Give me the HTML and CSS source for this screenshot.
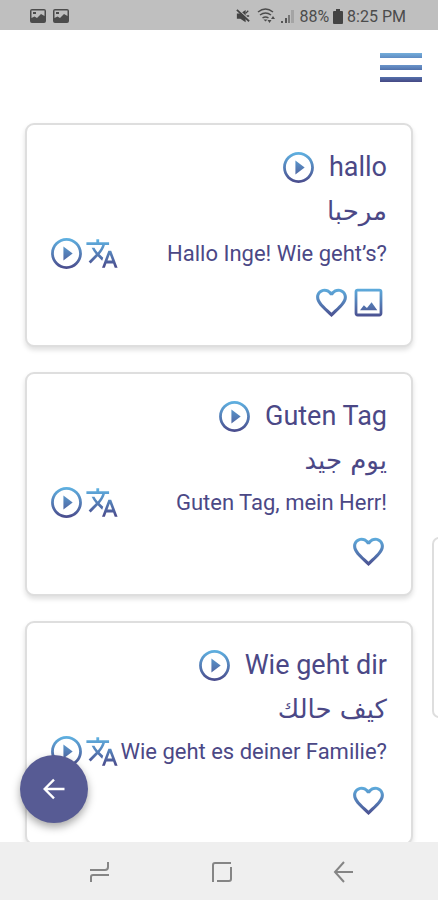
FILE: index.html
```html
<!DOCTYPE html>
<html lang="de">
<head>
<meta charset="utf-8">
<meta name="viewport" content="width=device-width, initial-scale=1">
<title>Wortschatz</title>
<link rel="stylesheet" href="styles.css">
</head>
<body>
<svg class="defs" aria-hidden="true">
  <defs>
    <linearGradient id="tint" gradientUnits="userSpaceOnUse" x1="0" y1="2" x2="0" y2="22">
      <stop offset="0" stop-color="#5fb2e2"/>
      <stop offset="1" stop-color="#4a4b8c"/>
    </linearGradient>
    <symbol id="play" viewBox="0 0 24 24"><path fill="url(#tint)" d="M10 16.500l6-4.500-6-4.500v9zM12 2C6.480 2 2 6.480 2 12s4.480 10 10 10 10-4.480 10-10S17.520 2 12 2zm0 18.200c-4.520 0-8.200-3.680-8.200-8.200S7.480 3.800 12 3.800s8.200 3.680 8.200 8.200-3.680 8.200-8.200 8.200z"/></symbol>
    <symbol id="translate" viewBox="0 0 24 24"><path fill="url(#tint)" d="M12.870 15.070l-2.540-2.510.030-.030c1.740-1.940 2.980-4.170 3.710-6.530H17V4h-7V2H8v2H1v1.990h11.170C11.500 7.920 10.440 9.750 9 11.350 8.070 10.320 7.300 9.190 6.690 8h-2c.730 1.630 1.730 3.170 2.980 4.560l-5.090 5.020L4 19l5-5 3.110 3.110.760-2.040zM18.500 10h-2L12 22h2l1.120-3h4.750L21 22h2l-4.500-12zm-2.620 7l1.620-4.330L19.120 17h-3.240z"/></symbol>
    <symbol id="heart" viewBox="0 0 24 24"><path fill="url(#tint)" d="M16.500 3c-1.740 0-3.410.810-4.500 2.090C10.910 3.810 9.240 3 7.500 3 4.420 3 2 5.420 2 8.500c0 3.780 3.400 6.860 8.550 11.540L12 21.350l1.450-1.320C18.600 15.360 22 12.280 22 8.500 22 5.420 19.580 3 16.500 3zm-4.400 15.550l-.100.100-.100-.100C7.140 14.240 4 11.390 4 8.500 4 6.500 5.500 5 7.500 5c1.540 0 3.040.990 3.570 2.360h1.870C13.460 5.990 14.960 5 16.500 5c2 0 3.500 1.500 3.500 3.500 0 2.890-3.140 5.740-7.900 10.050z"/></symbol>
    <symbol id="picture" viewBox="0 0 24 24"><path fill="url(#tint)" fill-rule="evenodd" d="M5 3h14a2 2 0 0 1 2 2v14a2 2 0 0 1-2 2H5a2 2 0 0 1-2-2V5a2 2 0 0 1 2-2zM4.800 4.800v14.400h14.400V4.800zM6.500 17l2.500-3.200 2 1.700 3-3.700 3.700 5.200z"/></symbol>
    <symbol id="photo" viewBox="0 0 16 14"><path fill="#4c4c4c" fill-rule="evenodd" d="M2 0h12a2 2 0 0 1 2 2v10a2 2 0 0 1-2 2H2a2 2 0 0 1-2-2V2a2 2 0 0 1 2-2zM1.500 1.500V9l3-1.500L7 9l4-4 3.500 2V1.500zM3 3h3v2H3z"/></symbol>
  </defs>
</svg>
<div class="screen">
  <div class="status">
    <div class="status-side">
      <svg class="photo"><use href="#photo"/></svg>
      <svg class="photo"><use href="#photo"/></svg>
    </div>
    <div class="status-side status-info">
      <svg class="mute" viewBox="0 0 16 16" fill="#444"><path d="M1 5h4l6-4v14l-6-4H1z"/><path d="M11 5l3-3M12 8h3" stroke="#444" stroke-width="1.500"/><path d="M2 0l14 13" stroke="#bfbfbf" stroke-width="1.500"/><path d="M1 1l14 13" stroke="#444" stroke-width="2"/></svg>
      <svg class="wifi" viewBox="0 0 20 16" fill="none" stroke="#4c4c4c" stroke-width="1.500"><path d="M1 4q7.500-6 15 0M3 7q5.500-4 11 0M5.500 10q3-2.200 6 0"/><path d="M8.500 13.500l-2-2h4z" fill="#4c4c4c" stroke="none"/><path d="M10.500 12l2 3 2-3zM14 11l2-3 2 3z" fill="#4c4c4c" stroke="none"/></svg>
      <svg class="signal" viewBox="0 0 14 16"><path fill="#555" d="M0 13h2v2H0zM4 10h2v5H4z"/><path fill="#777" d="M7 7h2v8H7z"/><path fill="#a4a4a4" d="M10 2h3v13h-3z"/></svg>
      <span>88%</span>
      <svg class="battery" viewBox="0 0 10 15"><path fill="#444" d="M3 0h4v2h2a1 1 0 0 1 1 1v11a1 1 0 0 1-1 1H1a1 1 0 0 1-1-1V3a1 1 0 0 1 1-1h2z"/></svg>
      <span>8:25 PM</span>
    </div>
  </div>
  <header class="bar">
    <button class="menu" aria-label="Menü"><i class="line light"></i><i class="line mid"></i><i class="line dark"></i></button>
  </header>
  <main class="list">
    <article class="card">
      <div class="word"><button class="icon" aria-label="Wort abspielen"><svg><use href="#play"/></svg></button><h2>hallo</h2></div>
      <p class="arabic" lang="ar" dir="rtl">مرحبا</p>
      <div class="example">
        <div class="tools"><button class="icon" aria-label="Satz abspielen"><svg><use href="#play"/></svg></button><button class="icon small" aria-label="Übersetzen"><svg><use href="#translate"/></svg></button></div>
        <p>Hallo Inge! Wie geht’s?</p>
      </div>
      <div class="actions"><button class="icon" aria-label="Merken"><svg><use href="#heart"/></svg></button><button class="icon" aria-label="Bild"><svg><use href="#picture"/></svg></button></div>
    </article>
    <article class="card">
      <div class="word"><button class="icon" aria-label="Wort abspielen"><svg><use href="#play"/></svg></button><h2>Guten Tag</h2></div>
      <p class="arabic" lang="ar" dir="rtl">يوم جيد</p>
      <div class="example">
        <div class="tools"><button class="icon" aria-label="Satz abspielen"><svg><use href="#play"/></svg></button><button class="icon small" aria-label="Übersetzen"><svg><use href="#translate"/></svg></button></div>
        <p>Guten Tag, mein Herr!</p>
      </div>
      <div class="actions"><button class="icon" aria-label="Merken"><svg><use href="#heart"/></svg></button></div>
    </article>
    <article class="card">
      <div class="word"><button class="icon" aria-label="Wort abspielen"><svg><use href="#play"/></svg></button><h2>Wie geht dir</h2></div>
      <p class="arabic" lang="ar" dir="rtl">كيف حالك</p>
      <div class="example">
        <div class="tools"><button class="icon" aria-label="Satz abspielen"><svg><use href="#play"/></svg></button><button class="icon small" aria-label="Übersetzen"><svg><use href="#translate"/></svg></button></div>
        <p>Wie geht es deiner Familie?</p>
      </div>
      <div class="actions"><button class="icon" aria-label="Merken"><svg><use href="#heart"/></svg></button></div>
    </article>
  </main>
  <nav class="system">
    <button class="key" aria-label="Letzte Apps"><svg viewBox="0 0 24 24"><path d="M2 10h15q3 0 3-3V2M21 15H5q-2 0-2 2v5"/></svg></button>
    <button class="key" aria-label="Startseite"><svg viewBox="0 0 24 24"><path d="M3 22V5q0-2 2-2h16M21 7v12q0 2-2 2H7"/></svg></button>
    <button class="key" aria-label="Zurück"><svg viewBox="0 0 24 24"><path d="M21 12H3M12 2L3 12l9 10"/></svg></button>
  </nav>
  <div class="edge"></div>
  <button class="back" aria-label="Zurück zur Übersicht"><svg viewBox="0 0 24 24"><path d="M21 12H5M12 4l-8 8 8 8"/></svg></button>
</div>
</body>
</html>
```
FILE: styles.css
```css
* { box-sizing: border-box; }
body { margin: 0; background: #fff; color: #4b4886; font-family: Roboto, "DejaVu Sans", sans-serif; }
button { padding: 0; border: 0; background: none; cursor: pointer; }
h2, p { margin: 0; font-weight: 400; white-space: nowrap; }
svg { display: block; }
.defs { position: absolute; width: 0; height: 0; }
.screen { position: relative; display: flex; flex-direction: column; height: 100vh; overflow: hidden; }

.status { flex: none; display: flex; justify-content: space-between; align-items: center; height: 30px; padding: 2px 32px 0 30px; background: #bfbfbf; color: #4c4c4c; font-size: 16px; }
.status-side { display: flex; align-items: center; gap: 7px; }
.status-info { gap: 4px; }
.photo { width: 16px; height: 14px; }
.mute { width: 16px; height: 14px; margin-right: 2px; }
.wifi { width: 20px; height: 16px; }
.signal { width: 14px; height: 16px; }
.battery { width: 10px; height: 15px; }

.bar { flex: none; display: flex; justify-content: flex-end; align-items: center; height: 74px; padding: 0 16px; }
.menu { display: flex; flex-direction: column; gap: 7px; width: 42px; }
.line { height: 5px; }
.light { background: linear-gradient(#74aedb, #5f8bc2); }
.mid { background: linear-gradient(#6995cb, #5272ac); }
.dark { background: linear-gradient(#5470ab, #454884); }

.list { flex: 1; min-height: 0; display: flex; flex-direction: column; gap: 25px; padding: 19px 25px 0; overflow: hidden; }
.card { flex: none; padding: 24px 24px 24px 21px; border: 2px solid #dedede; border-radius: 9px; background: #fff; box-shadow: 0 3px 5px rgba(0, 0, 0, 0.13); }
.icon, .icon svg { flex: none; display: block; width: 37px; height: 37px; }
.small, .small svg { width: 34px; }
.word { display: flex; justify-content: flex-end; align-items: center; gap: 12px; }
.word h2 { font-size: 27px; line-height: 37px; }
.arabic { height: 49px; font-family: "DejaVu Sans", sans-serif; font-size: 26px; line-height: 51px; }
.example { display: flex; justify-content: space-between; align-items: center; font-size: 22px; line-height: 37px; }
.tools { flex: none; display: flex; }
.actions { display: flex; justify-content: flex-end; margin-top: 12px; }

.system { flex: none; display: flex; justify-content: center; align-items: center; gap: 98px; height: 58px; padding: 2px 0 0 6px; background: #efefef; }
.key svg { width: 24px; height: 24px; fill: none; stroke: #858585; stroke-width: 2; }

.edge { position: absolute; right: -10px; top: 537px; width: 16px; height: 181px; border: 2px solid #dedede; border-radius: 7px; background: #fff; }
.back { position: absolute; left: 20px; bottom: 77px; display: flex; justify-content: center; align-items: center; width: 68px; height: 68px; border-radius: 50%; background: #575b94; box-shadow: 0 4px 8px rgba(0, 0, 0, 0.35); }
.back svg { width: 28px; height: 28px; fill: none; stroke: #fff; stroke-width: 2; }
```
